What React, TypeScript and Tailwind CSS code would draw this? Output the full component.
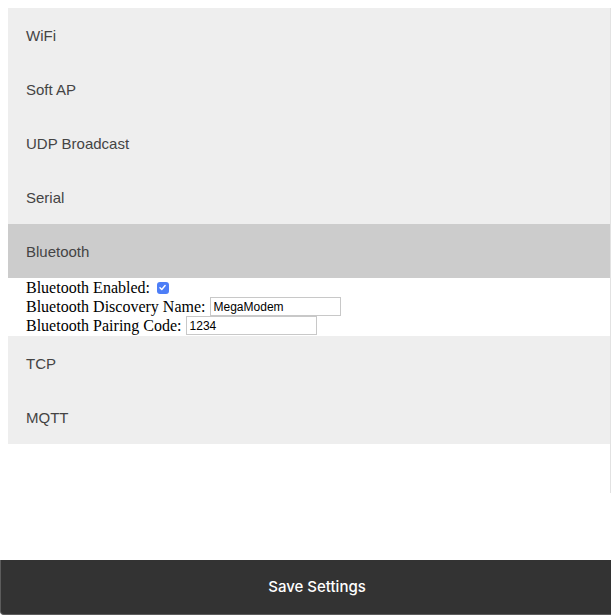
import React from "react";

const headers = ["WiFi", "Soft AP", "UDP Broadcast", "Serial"];
const after = ["TCP", "MQTT"];

function Header({ label, active }: { label: string; active?: boolean }) {
  return (
    <div
      className={`h-[54px] w-full flex items-center px-[18px] pt-[2px] text-[15px] text-[#444] font-['Liberation_Sans',Arial,sans-serif] ${
        active ? "bg-[#ccc]" : "bg-[#eee]"
      }`}
    >
      {label}
    </div>
  );
}

export default function App() {
  return (
    <div className="min-h-[615px] bg-white">
      <div className="ml-2 pt-2 w-[603px]">
        <div className="h-[485px] border-r border-[#e2e2e2]">
          {headers.map((h) => (
            <Header key={h} label={h} />
          ))}
          <Header label="Bluetooth" active />
          <div className="px-[18px] h-[58px] bg-white font-['Liberation_Serif','Times_New_Roman',serif] text-[16px] text-black">
            <div className="h-[19px] flex items-center whitespace-pre">
              <span>Bluetooth Enabled: </span>
              <span className="ml-[3px] w-[12px] h-[12px] rounded-[3px] bg-[#4d7ef7] flex items-center justify-center">
                <svg width="9" height="9" viewBox="0 0 10 10">
                  <path d="M2.2 5.2 L4.2 7.2 L7.9 2.8" stroke="white" strokeWidth="1.6" fill="none" strokeLinecap="round" strokeLinejoin="round" />
                </svg>
              </span>
            </div>
            <div className="h-[19px] flex items-center whitespace-pre">
              <span>Bluetooth Discovery Name: </span>
              <div className="w-[131px] h-[19px] border border-[#c8c8c8] flex items-center pl-[3px] text-[12px] font-['Liberation_Sans',Arial,sans-serif]">
                MegaModem
              </div>
            </div>
            <div className="h-[19px] flex items-center whitespace-pre">
              <span>Bluetooth Pairing Code: </span>
              <div className="w-[131px] h-[19px] border border-[#c8c8c8] flex items-center pl-[3px] text-[12px] font-['Liberation_Sans',Arial,sans-serif]">
                1234
              </div>
            </div>
          </div>
          {after.map((h) => (
            <Header key={h} label={h} />
          ))}
        </div>
      </div>
      <div className="fixed bottom-0 left-0 w-[633px] h-[55px] bg-[#333] border-l border-b border-[#5c5c5c] rounded-bl-[4px] flex items-center justify-center text-white text-[15px] font-medium font-['Inter',sans-serif]">
        Save Settings
      </div>
    </div>
  );
}
